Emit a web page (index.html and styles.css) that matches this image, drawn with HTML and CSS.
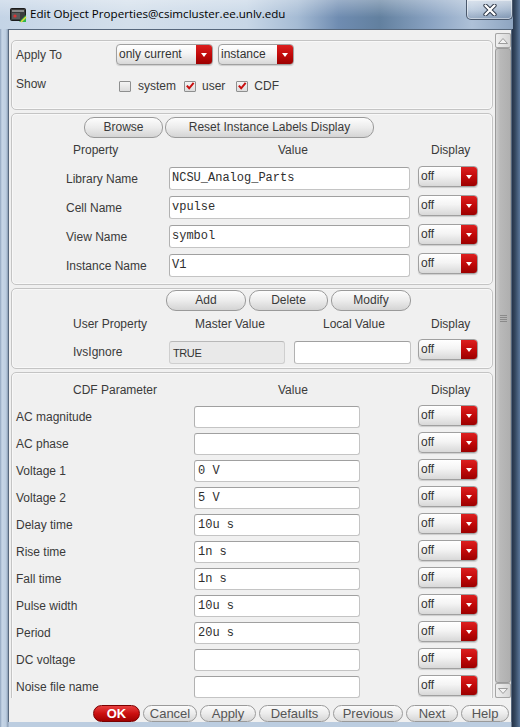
FILE: index.html
```html
<!DOCTYPE html>
<html>
<head>
<meta charset="utf-8">
<title>Edit Object Properties</title>
<link rel="stylesheet" href="styles.css">
</head>
<body>
<div class="window">
  <div class="titlebar">
    <svg class="appicon" width="17" height="16" viewBox="0 0 17 16">
      <rect x="0.5" y="1.5" width="15" height="12" rx="1" fill="#3b3b3b" stroke="#1c1c1c"/>
      <rect x="2" y="3" width="12" height="2" fill="#8a8a8a"/>
      <rect x="2" y="6" width="8" height="6" fill="#5a5a5a"/>
      <path d="M9 15 L16 8 L16 15 Z" fill="#2db84a"/>
      <path d="M11 15 L16 10" stroke="#e8d23a" stroke-width="1.5"/>
      <circle cx="5" cy="9" r="1.6" fill="#d33"/>
    </svg>
    <span class="title">Edit Object Properties@csimcluster.ee.unlv.edu</span>
    <div class="closebtn">
      <svg width="14" height="12" viewBox="0 0 14 12">
        <path d="M2.5 1.5 L11.5 10.5 M11.5 1.5 L2.5 10.5" stroke="#2a3444" stroke-width="4.2" stroke-linecap="round"/>
        <path d="M2.5 1.5 L11.5 10.5 M11.5 1.5 L2.5 10.5" stroke="#ffffff" stroke-width="2.4" stroke-linecap="round"/>
      </svg>
    </div>
  </div>

  <div class="client">
    <div class="main">
      <div class="content">

        <div class="panel p1">
          <div class="row r-apply">
            <span class="lbl w100">Apply To</span>
            <div class="dd dd-only"><span class="dd-text">only current</span><span class="dd-arrow"></span></div>
            <div class="dd dd-inst"><span class="dd-text">instance</span><span class="dd-arrow"></span></div>
          </div>
          <div class="row r-show">
            <span class="lbl w100 show-lbl">Show</span>
            <span class="cb cb-first"></span><span class="cbl cbl-sys">system</span>
            <span class="cb"><svg width="11" height="10" viewBox="0 0 11 10"><path d="M2 4.5 L4.6 7.5 L9.5 1.5" fill="none" stroke="#c80f0f" stroke-width="2.2"/></svg></span><span class="cbl cbl-user">user</span>
            <span class="cb"><svg width="11" height="10" viewBox="0 0 11 10"><path d="M2 4.5 L4.6 7.5 L9.5 1.5" fill="none" stroke="#c80f0f" stroke-width="2.2"/></svg></span><span class="cbl">CDF</span>
          </div>
        </div>

        <div class="panel p2">
          <div class="btnrow br-p2">
            <span class="btn w-browse">Browse</span>
            <span class="btn w-reset">Reset Instance Labels Display</span>
          </div>
          <div class="hdr">
            <span class="h-prop">Property</span>
            <span class="h-val">Value</span>
            <span>Display</span>
          </div>
          <div class="prow">
            <span class="lbl w-p2lbl">Library Name</span>
            <span class="inp w-p2inp">NCSU_Analog_Parts</span>
            <div class="dd dd-off dd-p2"><span class="dd-text">off</span><span class="dd-arrow"></span></div>
          </div>
          <div class="prow">
            <span class="lbl w-p2lbl">Cell Name</span>
            <span class="inp w-p2inp">vpulse</span>
            <div class="dd dd-off dd-p2"><span class="dd-text">off</span><span class="dd-arrow"></span></div>
          </div>
          <div class="prow">
            <span class="lbl w-p2lbl">View Name</span>
            <span class="inp w-p2inp">symbol</span>
            <div class="dd dd-off dd-p2"><span class="dd-text">off</span><span class="dd-arrow"></span></div>
          </div>
          <div class="prow">
            <span class="lbl w-p2lbl">Instance Name</span>
            <span class="inp w-p2inp">V1</span>
            <div class="dd dd-off dd-p2"><span class="dd-text">off</span><span class="dd-arrow"></span></div>
          </div>
        </div>

        <div class="panel p3">
          <div class="btnrow br-p3">
            <span class="btn w-add">Add</span>
            <span class="btn w-del">Delete</span>
            <span class="btn w-mod">Modify</span>
          </div>
          <div class="hdr hdr-p3">
            <span class="h-up">User Property</span>
            <span class="h-mv">Master Value</span>
            <span class="h-lv">Local Value</span>
            <span>Display</span>
          </div>
          <div class="urow">
            <span class="lbl w-p3lbl">IvsIgnore</span>
            <span class="ro">TRUE</span>
            <span class="inp w-local"></span>
            <div class="dd dd-off dd-p3"><span class="dd-text">off</span><span class="dd-arrow"></span></div>
          </div>
        </div>

        <div class="panel p4">
          <div class="hdr hdr-p4">
            <span class="h-prop">CDF Parameter</span>
            <span class="h-val">Value</span>
            <span>Display</span>
          </div>
          <div class="crow"><span class="lbl w-p4lbl">AC magnitude</span><span class="inp w-p4inp"></span><div class="dd dd-off dd-p4"><span class="dd-text">off</span><span class="dd-arrow"></span></div></div>
          <div class="crow"><span class="lbl w-p4lbl">AC phase</span><span class="inp w-p4inp"></span><div class="dd dd-off dd-p4"><span class="dd-text">off</span><span class="dd-arrow"></span></div></div>
          <div class="crow"><span class="lbl w-p4lbl">Voltage 1</span><span class="inp w-p4inp">0 V</span><div class="dd dd-off dd-p4"><span class="dd-text">off</span><span class="dd-arrow"></span></div></div>
          <div class="crow"><span class="lbl w-p4lbl">Voltage 2</span><span class="inp w-p4inp">5 V</span><div class="dd dd-off dd-p4"><span class="dd-text">off</span><span class="dd-arrow"></span></div></div>
          <div class="crow"><span class="lbl w-p4lbl">Delay time</span><span class="inp w-p4inp">10u s</span><div class="dd dd-off dd-p4"><span class="dd-text">off</span><span class="dd-arrow"></span></div></div>
          <div class="crow"><span class="lbl w-p4lbl">Rise time</span><span class="inp w-p4inp">1n s</span><div class="dd dd-off dd-p4"><span class="dd-text">off</span><span class="dd-arrow"></span></div></div>
          <div class="crow"><span class="lbl w-p4lbl">Fall time</span><span class="inp w-p4inp">1n s</span><div class="dd dd-off dd-p4"><span class="dd-text">off</span><span class="dd-arrow"></span></div></div>
          <div class="crow"><span class="lbl w-p4lbl">Pulse width</span><span class="inp w-p4inp">10u s</span><div class="dd dd-off dd-p4"><span class="dd-text">off</span><span class="dd-arrow"></span></div></div>
          <div class="crow"><span class="lbl w-p4lbl">Period</span><span class="inp w-p4inp">20u s</span><div class="dd dd-off dd-p4"><span class="dd-text">off</span><span class="dd-arrow"></span></div></div>
          <div class="crow"><span class="lbl w-p4lbl">DC voltage</span><span class="inp w-p4inp"></span><div class="dd dd-off dd-p4"><span class="dd-text">off</span><span class="dd-arrow"></span></div></div>
          <div class="crow"><span class="lbl w-p4lbl">Noise file name</span><span class="inp w-p4inp"></span><div class="dd dd-off dd-p4"><span class="dd-text">off</span><span class="dd-arrow"></span></div></div>
        </div>

      </div>
      <div class="scrollbar">
        <div class="sb-btn">
          <svg width="12" height="8" viewBox="0 0 12 8"><path d="M1.5 6.5 L6 1.5 L10.5 6.5 Z" fill="#f2f2f2" stroke="#9c9c9c"/></svg>
        </div>
        <div class="sb-thumb">
          <span class="grip"></span>
        </div>
        <div class="sb-btn">
          <svg width="12" height="8" viewBox="0 0 12 8"><path d="M1.5 1.5 L6 6.5 L10.5 1.5 Z" fill="#f2f2f2" stroke="#9c9c9c"/></svg>
        </div>
      </div>
    </div>
    <div class="footer">
      <span class="fbtn ok">OK</span>
      <span class="fbtn fb-cancel">Cancel</span>
      <span class="fbtn fb-apply">Apply</span>
      <span class="fbtn fb-defaults">Defaults</span>
      <span class="fbtn fb-prev">Previous</span>
      <span class="fbtn fb-next">Next</span>
      <span class="fbtn fb-help">Help</span>
    </div>
  </div>
</div>
</body>
</html>
```

FILE: styles.css
```css
* { box-sizing: border-box; }

body {
  margin: 0;
  background: #ffffff;
  font-family: "Liberation Sans", Arial, sans-serif;
  font-size: 12px;
  color: #3a3a3a;
}

.window {
  width: 520px;
  height: 727px;
  overflow: hidden;
  display: flex;
  flex-direction: column;
  background: linear-gradient(to right, #8ea3bd 0px, #c6d5e6 2px, #bccde0 6px, #8a9db4 8px, #bccde0 9px, #bccde0 511px, #26344a 512px, #34475f 515px, #5b7699 520px);
}

/* ---------- title bar ---------- */
.titlebar {
  width: 513px;
  height: 29px;
  flex: none;
  display: flex;
  align-items: flex-start;
  background:
    linear-gradient(to bottom, rgba(255,255,255,0.3), rgba(255,255,255,0) 60%),
    linear-gradient(to right, #c4d4e6 0%, #d3dfeb 25%, #c8d7e7 48%, #a5bbd4 58%, #6f8cb1 66%, #62809f 74%, #8aa3c2 84%, #aec1d8 92%, #8ea5c1 100%);
}

.appicon {
  margin: 7px 0 0 10px;
  flex: none;
}

.title {
  margin: 6px 0 0 3px;
  font-family: "Open Sans", "Liberation Sans", sans-serif;
  font-size: 11.6px;
  line-height: 16px;
  color: #000000;
  white-space: nowrap;
}

.closebtn {
  margin-left: auto;
  width: 47px;
  height: 20px;
  border: 1px solid #4a586c;
  border-top: none;
  border-radius: 0 0 5px 5px;
  background: linear-gradient(to bottom, rgba(255,255,255,0.35), rgba(255,255,255,0.12) 50%, rgba(60,80,110,0.2));
  box-shadow: inset 0 0 0 1px rgba(255,255,255,0.45);
  display: flex;
  align-items: center;
  justify-content: center;
}

/* ---------- client ---------- */
.client {
  margin: 0 8px;
  height: 693px;
  flex: none;
  border: 1px solid #56677c;
  border-bottom: none;
  background: #f0f0f0;
  display: flex;
  flex-direction: column;
}

.main {
  height: 668px;
  flex: none;
  padding-top: 3px;
  display: flex;
}

.content {
  width: 486px;
  height: 665px;
  overflow: hidden;
  padding: 7px 0 0 2px;
}

/* ---------- panels ---------- */
.panel {
  width: 482px;
  border: 1px solid #c4c4c4;
  border-radius: 5px;
  margin-bottom: 3px;
  background: #f0f0f0;
  box-shadow: inset 0 0 0 1px #f8f8f8;
}

.p1 { height: 70px; padding: 3px 0 0 4px; }
.p2 { height: 172px; padding-top: 3px; }
.p3 { height: 81px; padding-top: 1px; }
.p4 { height: 400px; padding-top: 6px; }

.lbl {
  white-space: nowrap;
  color: #3a3a3a;
  flex: none;
}

.w100 { width: 100px; }

.row {
  display: flex;
  align-items: center;
}

.r-apply { height: 21px; }
.r-show { height: 20px; margin-top: 11px; }
.show-lbl { margin-top: -4px; }

/* dropdowns */
.dd {
  display: flex;
  height: 21px;
  border: 1px solid #a0a0a0;
  border-radius: 4px;
  overflow: hidden;
  background: linear-gradient(to bottom, #ffffff 0%, #f4f4f4 45%, #d8d8d8 100%);
  box-shadow: 0 1px 1px rgba(0,0,0,0.15);
  flex: none;
}

.dd-text {
  flex: 1;
  padding-left: 2px;
  line-height: 19px;
  color: #333333;
  white-space: nowrap;
  overflow: hidden;
}

.dd-arrow {
  width: 16px;
  flex: none;
  background: linear-gradient(to bottom, #dc1f1f 0%, #c20a0a 50%, #9c0000 100%);
  display: flex;
  align-items: center;
  justify-content: center;
}

.dd-arrow::after {
  content: "";
  width: 0;
  height: 0;
  border-left: 3px solid transparent;
  border-right: 3px solid transparent;
  border-top: 4px solid #ffffff;
  margin-top: 1px;
}

.dd-only { width: 97px; }
.dd-inst { width: 76px; margin-left: 5px; }
.dd-off { width: 60px; }
.dd-p2 { margin-left: 8px; margin-top: -4px; }
.dd-p3 { margin-left: 7px; margin-top: -5px; }
.dd-p4 { margin-left: 58px; margin-top: -2px; }

/* checkboxes */
.cb {
  width: 12px;
  height: 11px;
  border: 1px solid #8e8f8f;
  border-radius: 1px;
  background: linear-gradient(to bottom, #f4f4f4, #dcdcdc);
  display: flex;
  align-items: center;
  justify-content: center;
  flex: none;
}

.cb-first { margin-left: 3px; }

.cbl {
  margin-left: 6px;
  margin-right: 10px;
  color: #3a3a3a;
}

.cbl-sys { margin-left: 7px; margin-right: 8px; }
.cbl-user { margin-right: 11px; }

/* buttons */
.btnrow {
  display: flex;
  height: 21px;
  gap: 2px;
}

.br-p2 { padding-left: 72px; }
.br-p3 { padding-left: 154px; gap: 3px; height: 22px; }

.btn {
  height: 21px;
  border: 1px solid #9a9a9a;
  border-radius: 10px;
  background: linear-gradient(to bottom, #fdfdfd 0%, #ececec 50%, #d4d4d4 100%);
  text-align: center;
  line-height: 19px;
  color: #3a3a3a;
  white-space: nowrap;
}

.w-browse { width: 79px; }
.w-reset { width: 209px; }
.w-add { width: 80px; }
.w-del { width: 79px; }
.w-mod { width: 80px; }

/* headers */
.hdr {
  display: flex;
  height: 26px;
  padding-left: 61px;
  line-height: 24px;
  color: #3a3a3a;
}

.h-prop { width: 205px; }
.h-val { width: 153px; }

.hdr-p3 { height: 24px; line-height: 24px; }
.h-up { width: 122px; }
.h-mv { width: 128px; }
.h-lv { width: 108px; }

.hdr-p4 { height: 24px; line-height: 22px; }

/* rows */
.prow {
  display: flex;
  align-items: center;
  height: 29px;
  padding-left: 54px;
}

.w-p2lbl { width: 103px; }

.inp {
  height: 23px;
  border: 1px solid #c4c4c4;
  border-top-color: #a0a0a0;
  border-left-color: #b2b2b2;
  border-radius: 3px;
  background: #ffffff;
  font-family: "Liberation Mono", "DejaVu Sans Mono", monospace;
  font-size: 12px;
  line-height: 21px;
  padding-left: 2px;
  color: #2e2e2e;
  white-space: nowrap;
  flex: none;
}

.w-p2inp { width: 241px; }

.urow {
  display: flex;
  align-items: center;
  height: 32px;
  padding-left: 61px;
}

.w-p3lbl { width: 96px; }

.ro {
  width: 116px;
  height: 23px;
  border: 1px solid #cfcfcf;
  border-top-color: #b8b8b8;
  border-radius: 3px;
  background: #e9e9e9;
  font-size: 11px;
  letter-spacing: -0.4px;
  line-height: 23px;
  padding-left: 3px;
  color: #333333;
  flex: none;
}

.w-local { width: 117px; margin-left: 9px; }

.crow {
  display: flex;
  align-items: center;
  height: 27px;
  padding-left: 4px;
}

.w-p4lbl { width: 178px; }
.w-p4inp { width: 166px; height: 22px; line-height: 20px; padding-left: 3px; }

/* scrollbar */
.scrollbar {
  width: 16px;
  height: 665px;
  display: flex;
  flex-direction: column;
  flex: none;
  background: #d9d9d9;
}

.sb-btn {
  height: 15px;
  flex: none;
  border: 1px solid #a5a5a5;
  border-radius: 2px;
  background: linear-gradient(to right, #f0f0f0, #d6d6d6);
  display: flex;
  align-items: center;
  justify-content: center;
}

.sb-thumb {
  flex: 1;
  border: 1px solid #9b9b9b;
  border-radius: 3px;
  background: linear-gradient(to right, #cfcfcf 0%, #b9b9b9 30%, #afafaf 100%);
  display: flex;
  justify-content: center;
}

.grip {
  margin-top: 266px;
  width: 7px;
  height: 7px;
  background: repeating-linear-gradient(to bottom, #8a8a8a 0px, #8a8a8a 1px, transparent 1px, transparent 2px);
}

/* footer */
.footer {
  flex: 1;
  display: flex;
  justify-content: flex-end;
  gap: 3px;
  padding: 7px 2px 0 0;
}

.fbtn {
  height: 17px;
  border: 1px solid #9a9a9a;
  border-radius: 9px;
  background: linear-gradient(to bottom, #fbfbfb 0%, #ececec 50%, #d6d6d6 100%);
  font-size: 13px;
  line-height: 15px;
  text-align: center;
  color: #555555;
  white-space: nowrap;
}

.ok {
  width: 47px;
  border-color: #7a0000;
  background: linear-gradient(to bottom, #e84040 0%, #cc1010 50%, #a00000 100%);
  color: #ffffff;
  font-weight: bold;
}

.fb-cancel { width: 54px; }
.fb-apply { width: 56px; }
.fb-defaults { width: 71px; }
.fb-prev { width: 70px; }
.fb-next { width: 52px; }
.fb-help { width: 48px; }
```
